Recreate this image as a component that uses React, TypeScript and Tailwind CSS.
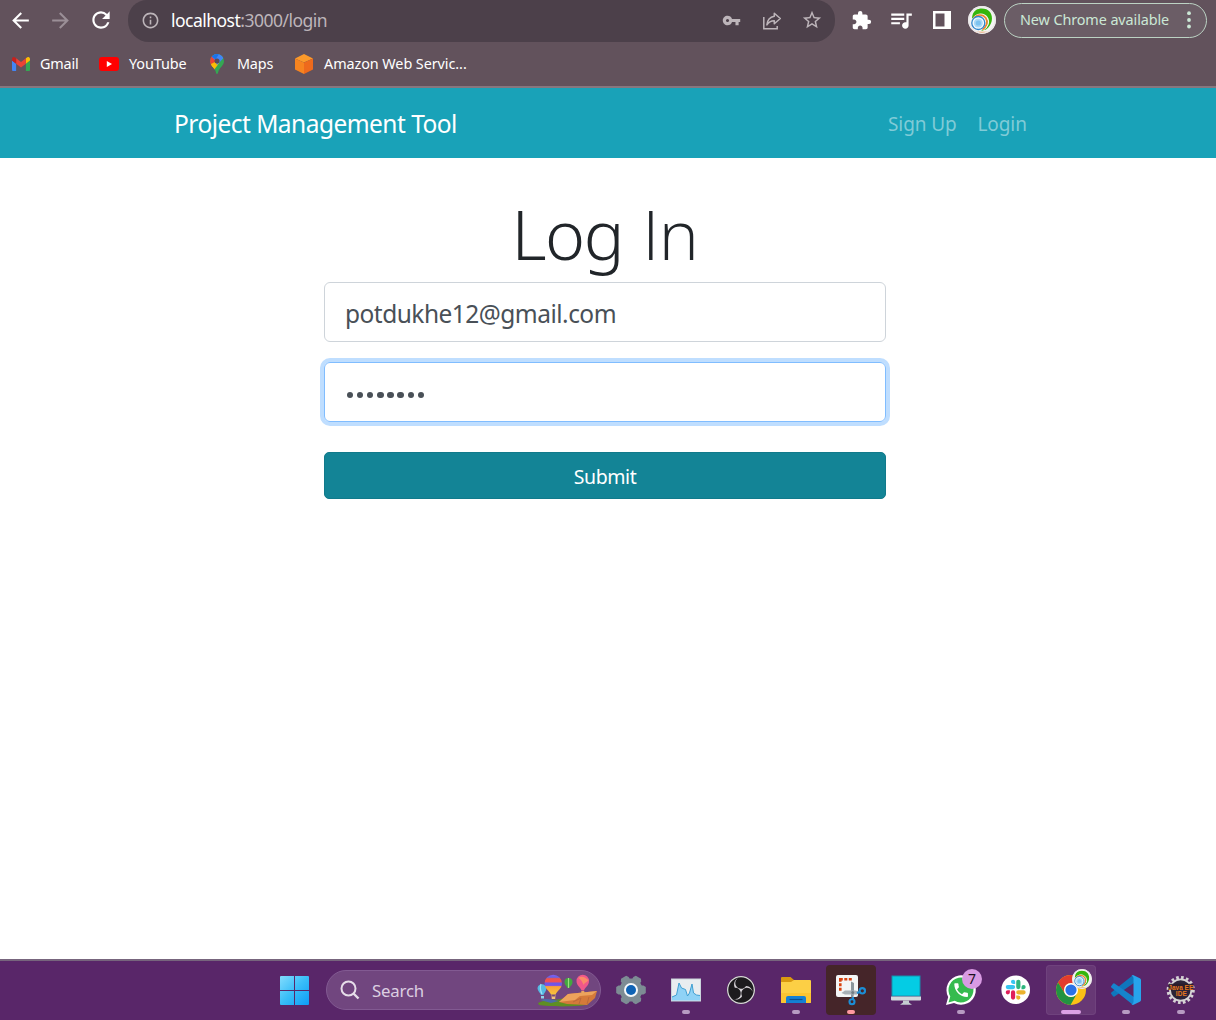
import React, { useId } from "react";
import {
  MdArrowBack,
  MdArrowForward,
  MdRefresh,
  MdInfoOutline,
  MdVpnKey,
  MdStarBorder,
  MdExtension,
  MdQueueMusic,
} from "react-icons/md";
import { SiObsstudio } from "react-icons/si";

function Avatar({ className }: { className: string }) {
  const id = useId();
  return (
    <svg viewBox="0 0 28 28" className={className}>
      <defs>
        <clipPath id={id}>
          <circle cx="14" cy="14" r="13.9" />
        </clipPath>
      </defs>
      <g clipPath={`url(#${id})`}>
        <rect width="28" height="28" fill="#f4f4f2" />
        <path d="M8 4C12 1.500 19 2 22 6C25.500 11 24.500 19 18 23.500L13 25C20 20 21 12 16 9C11 7 7 9 4 13C4 9 5 6 8 4Z" fill="#35b50c" />
        <path d="M5 13C8.500 7 16 7 19 11.500C22 16 20 21 15 24" fill="none" stroke="#f4faf0" strokeWidth="1.400" />
        <path d="M5.500 12.500C9 7.800 15 8 17.800 12C20.300 16 18.500 21 14.500 23.500" fill="none" stroke="#f0812c" strokeWidth="1.600" />
        <circle cx="10.300" cy="17" r="6.500" fill="#f2f9fd" stroke="#2f86cc" strokeWidth="1.300" />
        <circle cx="10.300" cy="17" r="4.500" fill="#a9d8f5" />
        <circle cx="10.300" cy="17" r="2.600" fill="#7cc2ef" />
        <path d="M7 26.500H21" stroke="#f08a3c" strokeWidth="1.400" />
      </g>
      <circle cx="14" cy="14" r="13.2" fill="none" stroke="#ebe7e9" strokeWidth="1.500" />
    </svg>
  );
}

function ShareIcon() {
  return (
    <svg viewBox="0 0 20 20" className="ml-[21px] mt-px size-5" fill="none" stroke="#bdb5ba" strokeWidth="1.500">
      <path d="M1.800 6V17.800H15.200V15" />
      <path d="M12.300 2.200L18.300 7.500L12.300 12.800V9.700C8.800 9.700 6.500 11 4.900 13.900C5.300 9.600 7.700 6.100 12.300 5.300Z" strokeLinejoin="round" />
    </svg>
  );
}

function GmailIcon() {
  return (
    <svg viewBox="0 0 24 18" className="h-[14px] w-[18px]" preserveAspectRatio="none">
      <path d="M0 2.500V16.400C0 17.300.7 18 1.600 18H5.500V8.700L0 4.600Z" fill="#4285f4" />
      <path d="M18.500 18H22.400C23.300 18 24 17.300 24 16.400V4.600L18.500 8.700Z" fill="#34a853" />
      <path d="M18.500 1.600V8.700L24 4.600V2.500C24 .400 21.700-.800 20 .500Z" fill="#fbbc04" />
      <path d="M5.500 8.700V1.600L12 6.500L18.500 1.600V8.700L12 13.600Z" fill="#ea4335" />
      <path d="M0 2.500V4.600L5.500 8.700V1.600L4 .500C2.300-.800 0 .400 0 2.500Z" fill="#c5221f" />
    </svg>
  );
}

function YouTubeIcon() {
  return (
    <svg viewBox="0 0 20 14" className="h-[14px] w-5">
      <rect width="20" height="14" rx="3" fill="#f00" />
      <path d="M7.800 4L13 7L7.800 10Z" fill="#fff" />
    </svg>
  );
}

function MapsIcon() {
  const id = useId();
  return (
    <svg viewBox="0 0 14 20" className="h-5 w-[14px]">
      <defs>
        <clipPath id={id}>
          <path d="M7 0A7 7 0 0 1 14 7C14 11 10.500 13 8.700 16.500C8 18 8 20 7 20S6 18 5.300 16.500C3.500 13 0 11 0 7A7 7 0 0 1 7 0Z" />
        </clipPath>
      </defs>
      <g clipPath={`url(#${id})`}>
        <rect width="14" height="20" fill="#34a853" />
        <path d="M0 12L9.500 8.500L4 16L0 16Z" fill="#fbbc04" />
        <path d="M0 3L3 1L7 6L0 14Z" fill="#ea4335" />
        <path d="M-1 11L5 8L8 10L3 15Z" fill="#fbbc04" />
        <path d="M1.500 2.500L6-1L14 0V3.500L7 11L5 6Z" fill="#4285f4" />
        <path d="M1.500 2.500L5.500 5.500L9 0H3Z" fill="#1a73e8" />
      </g>
      <circle cx="7" cy="7" r="2.500" fill="#5b4b56" />
    </svg>
  );
}

function CubeIcon() {
  return (
    <svg viewBox="0 0 18 20" className="h-5 w-[18px]">
      <path d="M9 0L18 4.500L9 8.500L0 4.500Z" fill="#fb9a2b" />
      <path d="M0 4.500L9 8.500V20L0 15.500Z" fill="#f68420" />
      <path d="M18 4.500L9 8.500V20L18 15.500Z" fill="#ee6a1c" />
    </svg>
  );
}

function Bookmark({ icon, className, label, text }: { icon: React.ReactNode; className: string; label: string; text: string }) {
  return (
    <div className={`flex items-center ${className}`}>
      {icon}
      <span className={`whitespace-nowrap ${text}`}>{label}</span>
    </div>
  );
}

function BrowserBar() {
  return (
    <header className="h-[88px] border-b-2 border-[#86777f] bg-[#62525c] font-['Noto_Sans','Open_Sans',sans-serif]">
      <div className="flex h-[42px] items-start">
        <div className="flex h-10 w-32 items-center pl-2 text-white">
          <MdArrowBack className="size-[25px]" />
          <MdArrowForward className="ml-[15px] size-[25px] text-[#9b8f97]" />
          <MdRefresh className="ml-[15px] size-[26px]" />
        </div>
        <div className="flex h-[42px] w-[707px] items-center rounded-b-[21px] rounded-t-[19px] bg-[#4c404a] pl-[13px] pr-3 text-[#bdb5ba]">
          <MdInfoOutline className="mb-px size-[19px]" />
          <span className="ml-[11px] text-[17.500px] leading-none tracking-[-0.520px] whitespace-nowrap">
            <span className="text-white">localhost</span>:3000/login
          </span>
          <div className="ml-auto flex items-center pb-0.5">
            <MdVpnKey className="size-[19px]" />
            <ShareIcon />
            <MdStarBorder className="ml-[19px] size-[22px]" />
          </div>
        </div>
        <div className="flex h-10 flex-1 items-center pl-4 text-white">
          <MdExtension className="size-[21px]" />
          <MdQueueMusic className="ml-[16px] size-[26px]" />
          <svg viewBox="0 0 18 18" className="ml-[19px] size-[18px]">
            <path d="M0 0H18V18H0ZM2.500 2.500V15.500H11.500V2.500Z" fill="#fff" fillRule="evenodd" />
          </svg>
          <Avatar className="ml-[17px] size-7" />
          <div className="ml-2 flex h-[35px] w-[203px] items-center rounded-full border-[1.500px] border-[#bcd3c4] bg-[#6b5d66] pl-[15px] text-[#cbe8d6]">
            <span className="text-[14.400px] tracking-[-0.100px] whitespace-nowrap">New Chrome available</span>
            <svg viewBox="0 0 4 18" className="ml-[18px] h-[18px] w-1" fill="#cbe8d6">
              <circle cx="2" cy="2.200" r="1.900" />
              <circle cx="2" cy="9" r="1.900" />
              <circle cx="2" cy="15.500" r="1.900" />
            </svg>
          </div>
        </div>
      </div>
      <div className="flex h-[44px] items-center pl-3 text-[14.400px] text-white">
        <Bookmark icon={<GmailIcon />} className="w-[87px] gap-[10px]" label="Gmail" text="tracking-[-0.200px]" />
        <Bookmark icon={<YouTubeIcon />} className="w-[111px] gap-[10px]" label="YouTube" text="tracking-[-0.100px]" />
        <Bookmark icon={<MapsIcon />} className="w-[85px] gap-[13px]" label="Maps" text="tracking-[-0.200px]" />
        <Bookmark icon={<CubeIcon />} className="gap-[11px]" label="Amazon Web Servic..." text="tracking-[-0.070px]" />
      </div>
    </header>
  );
}

function LoginPage() {
  return (
    <main className="h-[871px] bg-white font-['Noto_Sans','Open_Sans',sans-serif]">
      <nav className="flex h-[70px] items-center bg-[#19a2b8] pl-[174px] pr-[190px] pt-[3px]">
        <span className="text-[24.500px] tracking-[-0.530px] whitespace-nowrap text-white">Project Management Tool</span>
        <div className="ml-auto flex text-[19px] tracking-[-0.100px] whitespace-nowrap text-[#80cbd7]">
          <a className="w-[89.500px]">Sign Up</a>
          <a className="w-[48.500px]">Login</a>
        </div>
      </nav>
      <form className="mx-auto w-[562px] -translate-x-[3px] pt-[38px]">
        <h1 className="h-[86px] text-center text-[68px] leading-[76px] font-light tracking-[-1.500px] text-[#212529]">
          Log <span className="ml-[3px] font-['Open_Sans'] leading-none tracking-[-0.500px]">In</span>
        </h1>
        <div className="flex h-[60px] items-center rounded-[6px] border border-[#ced4da] px-5 pt-1 text-[24.500px] tracking-[-0.520px] text-[#495057]">
          potdukhe12@gmail.com
        </div>
        <div className="mt-5 flex h-[60px] items-center gap-[3.700px] rounded-[6px] border border-[#80bdff] px-[21.500px] pt-[6px] shadow-[0_0_0_4px_#bfdeff]">
          {[0, 1, 2, 3, 4, 5, 6, 7].map((i) => (
            <span key={i} className="size-[6.500px] rounded-full bg-[#495057]" />
          ))}
        </div>
        <div className="mt-[30px] flex h-[47px] items-center justify-center rounded-[5px] border border-[#117a8b] bg-[#138496] pt-[3px] text-[19.500px] tracking-[-0.400px] text-white">
          Submit
        </div>
      </form>
    </main>
  );
}

function TaskCell({ children, className = "", dot = "" }: { children: React.ReactNode; className?: string; dot?: string }) {
  return (
    <div className={`relative size-[50px] shrink-0 rounded ${className}`}>
      {children}
      {dot && <span className={`absolute bottom-[1px] left-1/2 h-1 -translate-x-1/2 rounded-full ${dot}`} />}
    </div>
  );
}

const cell = "size-[50px]";

function Balloons() {
  const id = useId();
  return (
    <svg viewBox="0 0 62 34" className="h-[34px] w-[62px]">
      <defs>
        <linearGradient id={id} x1="0" y1="0" x2="0" y2="1">
          <stop offset="0" stopColor="#8a5cf0" />
          <stop offset=".12" stopColor="#5f63ee" />
          <stop offset=".2" stopColor="#f0524a" />
          <stop offset=".36" stopColor="#ef4f5a" />
          <stop offset=".42" stopColor="#6a58ea" />
          <stop offset=".54" stopColor="#7a50e8" />
          <stop offset=".6" stopColor="#f9a03a" />
          <stop offset="1" stopColor="#f7c43c" />
        </linearGradient>
      </defs>
      <path d="M1 29C8 25 18 27 27 24L52 30C46 33 12 33 2 31Z" fill="#5e8f22" />
      <path d="M3 26C10 23.500 17 26 22 27L14 29Z" fill="#4c6ca8" />
      <path d="M22 28L31 20L60 17L58 24L50 31L30 30Z" fill="#d57a3a" />
      <path d="M22 28L31 20L60 17L55 21L43 22L38 26Z" fill="#eda35c" />
      <path d="M36 28L44 24L42 30M52 23L50 30" stroke="#b9683a" strokeWidth=".9" fill="none" />
      <path d="M.500 14A4.600 4.600 0 0 1 9.500 14C9.500 17 7 19 6.500 21H4C3.500 19 .500 17 .500 14Z" fill="#55b9e2" />
      <path d="M4 10C3 13 3.500 17 5 20" stroke="#a5e2f5" strokeWidth="1.200" fill="none" />
      <rect x="4" y="22" width="3" height="2.500" fill="#8fd4e8" />
      <path d="M7.500 9.500A8.700 8.700 0 0 1 25 9.500C25 14.500 20 17 18.500 20.500H14C12.500 17 7.500 14.500 7.500 9.500Z" fill={`url(#${id})`} />
      <path d="M14.500 20.500L15 23.500H18L18.500 20.500" fill="none" stroke="#d6a560" strokeWidth=".6" />
      <rect x="14.700" y="22.500" width="3.500" height="2.500" fill="#f0c27a" />
      <path d="M27.500 8A4 4 0 0 1 35.500 8C35.500 11 33 12 32.500 14H30.500C30 12 27.500 11 27.500 8Z" fill="#43a83f" />
      <path d="M31.500 4V14" stroke="#9be07e" strokeWidth="1.200" />
      <path d="M39.500 7A6.200 6.200 0 0 1 52 7C52 12 48 13 47 16.500H44.500C43.500 13 39.500 12 39.500 7Z" fill="#f0588a" />
      <path d="M41.500 4C45 1 48.500 4 51.500 6C50.500 8 48 8 46.500 11C45.500 8 44.500 6 41.500 4Z" fill="#fb8a68" />
      <rect x="44.300" y="17" width="3" height="2.500" fill="#e8a660" />
    </svg>
  );
}

function GearIcon() {
  return (
    <svg viewBox="0 0 50 50" className={cell}>
      <g fill="#7d8c94">
        <circle cx="25" cy="25" r="11.500" />
        {[0, 60, 120].map((a) => (
          <path key={a} d="M12.500 20.500L10.200 22V28L12.500 29.500L37.500 29.500L39.800 28V22L37.500 20.500Z" transform={`rotate(${a} 25 25)`} />
        ))}
      </g>
      <circle cx="25" cy="25" r="7" fill="#f5f8fa" />
      <circle cx="25" cy="25" r="5" fill="#0f63b5" />
    </svg>
  );
}

function MonitorChartIcon() {
  return (
    <svg viewBox="0 0 50 50" className={cell}>
      <rect x="10.500" y="14" width="29" height="22" fill="#e9edf0" stroke="#c9d3da" />
      <path d="M11 32L15.500 30L18 18L20.500 23L24.500 24.500L26.500 31L28.500 28L31 19L32.500 28L35.500 30L39 30.500V35.500H11Z" fill="#8fd2f6" />
      <path d="M11 32L15.500 30L18 18L20.500 23L24.500 24.500L26.500 31L28.500 28L31 19L32.500 28L35.500 30L39 30.500" fill="none" stroke="#3f9fd2" />
    </svg>
  );
}

function FolderIcon() {
  return (
    <svg viewBox="0 0 50 50" className={cell}>
      <path d="M10 13Q10 12 11 12H19.500L23 15H26V20H10Z" fill="#d9990f" />
      <path d="M10 17H20L23 15H39Q40 15 40 16V37Q40 38 39 38H11Q10 38 10 37Z" fill="#fccf45" />
      <path d="M10 28H40V37Q40 38 39 38H11Q10 38 10 37Z" fill="#fbc431" />
      <path d="M15 38V33Q15 31 17 31H33Q35 31 35 33V38Z" fill="#1480d4" />
      <path d="M18.500 34.500H31.500" stroke="#0a4f90" strokeWidth="1.200" />
    </svg>
  );
}

function SnipIcon() {
  return (
    <svg viewBox="0 0 50 50" className={cell}>
      <rect x="10" y="10" width="22" height="22" rx="2" fill="#f4f5f6" />
      <g fill="#d8410f">
        <path d="M13 13H16.800V15.600H15.600V16.800H13ZM18.300 13H21.300V15.600H18.300ZM22.800 13H25.800V15.600H22.800Z" />
        <path d="M13 18.300H15.600V21.300H13ZM13 22.800H15.600V25.800H13Z" />
      </g>
      <path d="M25 16.500L28 18V29L27 33.500L25 32Z" fill="#8b959c" />
      <path d="M15.500 28L19 25.600H29L33 26.500L31 29.500H19Z" fill="#a8b0b6" />
      <circle cx="26.700" cy="27.500" r="1.500" fill="#727d84" />
      <path d="M27 32V35M31 28L34 27" stroke="#1b8ed6" strokeWidth="2" />
      <circle cx="26" cy="36.800" r="2.500" fill="none" stroke="#1b8ed6" strokeWidth="2.100" />
      <circle cx="36.300" cy="25.800" r="2.700" fill="none" stroke="#1b8ed6" strokeWidth="2.100" />
    </svg>
  );
}

function DesktopIcon() {
  return (
    <svg viewBox="0 0 50 50" className={cell}>
      <rect x="10.500" y="10.500" width="29" height="21" fill="#1690ad" />
      <rect x="11.500" y="11.500" width="27" height="19" fill="#04cce4" />
      <path d="M10 31.500H40V34.500Q40 35.500 39 35.500H11Q10 35.500 10 34.500Z" fill="#d3dade" />
      <path d="M22 35.500H28V37.500L31 39.800H19L22 37.500Z" fill="#c4ccd1" />
    </svg>
  );
}

function WhatsAppIcon() {
  return (
    <svg viewBox="0 0 50 50" className={cell}>
      <path d="M10 40L12.200 32A14.700 14.700 0 1 1 18 37.900Z" fill="#fff" />
      <path d="M12.500 37.500L14.300 31.500A12.500 12.500 0 1 1 18.700 35.800Z" fill="#35bb4e" />
      <path
        transform="translate(16 16) scale(.76)"
        d="M6.620 10.790c1.440 2.830 3.760 5.140 6.590 6.590l2.200-2.200c.27-.27.67-.36 1.020-.24 1.120.37 2.330.57 3.570.57.55 0 1 .45 1 1V20c0 .55-.45 1-1 1-9.390 0-17-7.610-17-17 0-.55.45-1 1-1h3.500c.55 0 1 .45 1 1 0 1.250.2 2.450.57 3.570.11.35.03.74-.25 1.020l-2.200 2.200z"
        fill="#fff"
      />
    </svg>
  );
}

function SlackIcon() {
  return (
    <svg viewBox="0 0 50 50" className={cell}>
      <circle cx="24.700" cy="24.700" r="14.300" fill="#fff" />
      <g transform="translate(14.700 14.700) scale(.833)">
        {["#36c5f0", "#2eb67d", "#ecb22e", "#e01e5a"].map((c, i) => (
          <path
            key={c}
            fill={c}
            transform={`rotate(${i * 90} 12 12)`}
            d="M8.834 5.042a2.528 2.528 0 0 1-2.521-2.520A2.528 2.528 0 0 1 8.834 0a2.528 2.528 0 0 1 2.521 2.522v2.520H8.834zM8.834 6.313a2.528 2.528 0 0 1 2.521 2.521 2.528 2.528 0 0 1-2.521 2.521H2.522A2.528 2.528 0 0 1 0 8.834a2.528 2.528 0 0 1 2.522-2.521h6.312z"
          />
        ))}
      </g>
    </svg>
  );
}

function ChromeIcon() {
  return (
    <svg viewBox="0 0 50 50" className={cell}>
      <circle cx="25" cy="25" r="15" fill="#fbc116" />
      <path d="M25 18H38.300A15 15 0 0 0 12 17.500L19 28.500A7 7 0 0 1 25 18Z" fill="#e33b2e" />
      <path d="M12 17.500A15 15 0 0 0 24.500 40L31 28.500A7 7 0 0 1 18.900 28.500Z" fill="#229342" />
      <circle cx="25" cy="25" r="7" fill="#fff" />
      <circle cx="25" cy="25" r="5.600" fill="#2a72e6" />
    </svg>
  );
}

function VsCodeIcon() {
  return (
    <svg viewBox="0 0 50 50" className={cell}>
      <path d="M10.300 29Q9.600 28.300 10.300 27.500L31.500 10.500L34 12V17.300L13.500 31.500Q12.800 32 12 31.300Z" fill="#0f76bd" />
      <path d="M10.300 21Q9.600 21.700 10.300 22.500L31.500 39.500L34 38V32.700L13.500 18.500Q12.800 18 12 18.700Z" fill="#1583cd" />
      <path d="M32 10L38.800 13.200Q40 13.800 40 15V35Q40 36.200 38.800 36.800L32 40L30.500 39.300Q32.500 39 32.500 37V13Q32.500 11 30.500 10.700Z" fill="#27a4ec" />
    </svg>
  );
}

function JavaIdeIcon() {
  return (
    <svg viewBox="0 0 50 50" className={cell}>
      <circle cx="24.700" cy="25" r="12.500" fill="none" stroke="#d6d3d5" strokeWidth="3.200" strokeDasharray="2.600 2.309" />
      <circle cx="24.700" cy="25" r="10.700" fill="#2c2438" stroke="#d6d3d5" strokeWidth="1.800" />
      <rect x="12.500" y="18.800" width="25" height="6.200" fill="#2b1c28" fillOpacity=".9" />
      <text x="24.800" y="24.500" textAnchor="middle" textLength="25" fontFamily="Liberation Sans" fontWeight="bold" fontSize="6.500" fill="#e5781f">Java EE</text>
      <text x="25.300" y="30.500" textAnchor="middle" textLength="11" fontFamily="Liberation Sans" fontWeight="bold" fontSize="6.500" fill="#e5781f">IDE</text>
    </svg>
  );
}

function Taskbar() {
  const id = useId();
  const small = "w-2 bg-[#b79bc2]";
  return (
    <footer className="h-[61px] border-t-2 border-[#77657d] bg-[#592669] pl-[269px] font-['Noto_Sans','Open_Sans',sans-serif]">
      <div className="flex items-center gap-[5px] pt-1">
        <TaskCell>
          <svg viewBox="0 0 50 50" className={cell}>
            <defs>
              <linearGradient id={id} gradientUnits="userSpaceOnUse" x1="11" y1="11" x2="40" y2="40">
                <stop offset="0" stopColor="#83dcfd" />
                <stop offset=".5" stopColor="#38bdf8" />
                <stop offset="1" stopColor="#0d9cf5" />
              </linearGradient>
            </defs>
            <path d="M11 12Q11 11 12 11H25V25H11ZM26 11H39Q40 11 40 12V25H26ZM11 26H25V40H12Q11 40 11 39ZM26 26H40V39Q40 40 39 40H26Z" fill={`url(#${id})`} />
          </svg>
        </TaskCell>
        <div className="ml-[2px] flex h-10 w-[275px] items-center rounded-full border border-[#825a92] bg-[#71467f] pl-[13px]">
          <svg viewBox="0 0 20 20" className="size-5" fill="none" stroke="#e6dde9" strokeWidth="2">
            <circle cx="8.500" cy="8.500" r="7" />
            <path d="M13.500 13.500L18.500 18.500" strokeWidth="2.400" />
          </svg>
          <span className="ml-3 pt-0.5 text-[16.800px] tracking-[-0.200px] text-[#dccfe1]">Search</span>
          <div className="ml-auto mr-px pt-0.5">
            <Balloons />
          </div>
        </div>
        <TaskCell><GearIcon /></TaskCell>
        <TaskCell dot={small}><MonitorChartIcon /></TaskCell>
        <TaskCell className="flex items-center justify-center">
          <span className="flex size-[28px] items-center justify-center rounded-full bg-[#1d1b1e]">
            <SiObsstudio className="size-7 text-[#d9d5da]" />
          </span>
        </TaskCell>
        <TaskCell dot={small}><FolderIcon /></TaskCell>
        <TaskCell className="bg-[#452529]" dot="w-2 bg-[#ff99a0]"><SnipIcon /></TaskCell>
        <TaskCell><DesktopIcon /></TaskCell>
        <TaskCell dot={small}>
          <WhatsAppIcon />
          <span className="absolute top-1 left-[26px] flex size-5 items-center justify-center rounded-full bg-[#d99be3] text-[14px] leading-none text-[#1d1020]">7</span>
        </TaskCell>
        <TaskCell><SlackIcon /></TaskCell>
        <TaskCell className="bg-[#673875] shadow-[inset_0_0_0_1px_#6f427d]" dot="w-5 bg-[#dca0e6]">
          <ChromeIcon />
          <Avatar className="absolute top-1 left-[26px] size-5" />
        </TaskCell>
        <TaskCell dot={small}><VsCodeIcon /></TaskCell>
        <TaskCell dot={small}><JavaIdeIcon /></TaskCell>
      </div>
    </footer>
  );
}

export default function App() {
  return (
    <div className="h-[1020px] w-[1216px] overflow-hidden">
      <BrowserBar />
      <LoginPage />
      <Taskbar />
    </div>
  );
}
